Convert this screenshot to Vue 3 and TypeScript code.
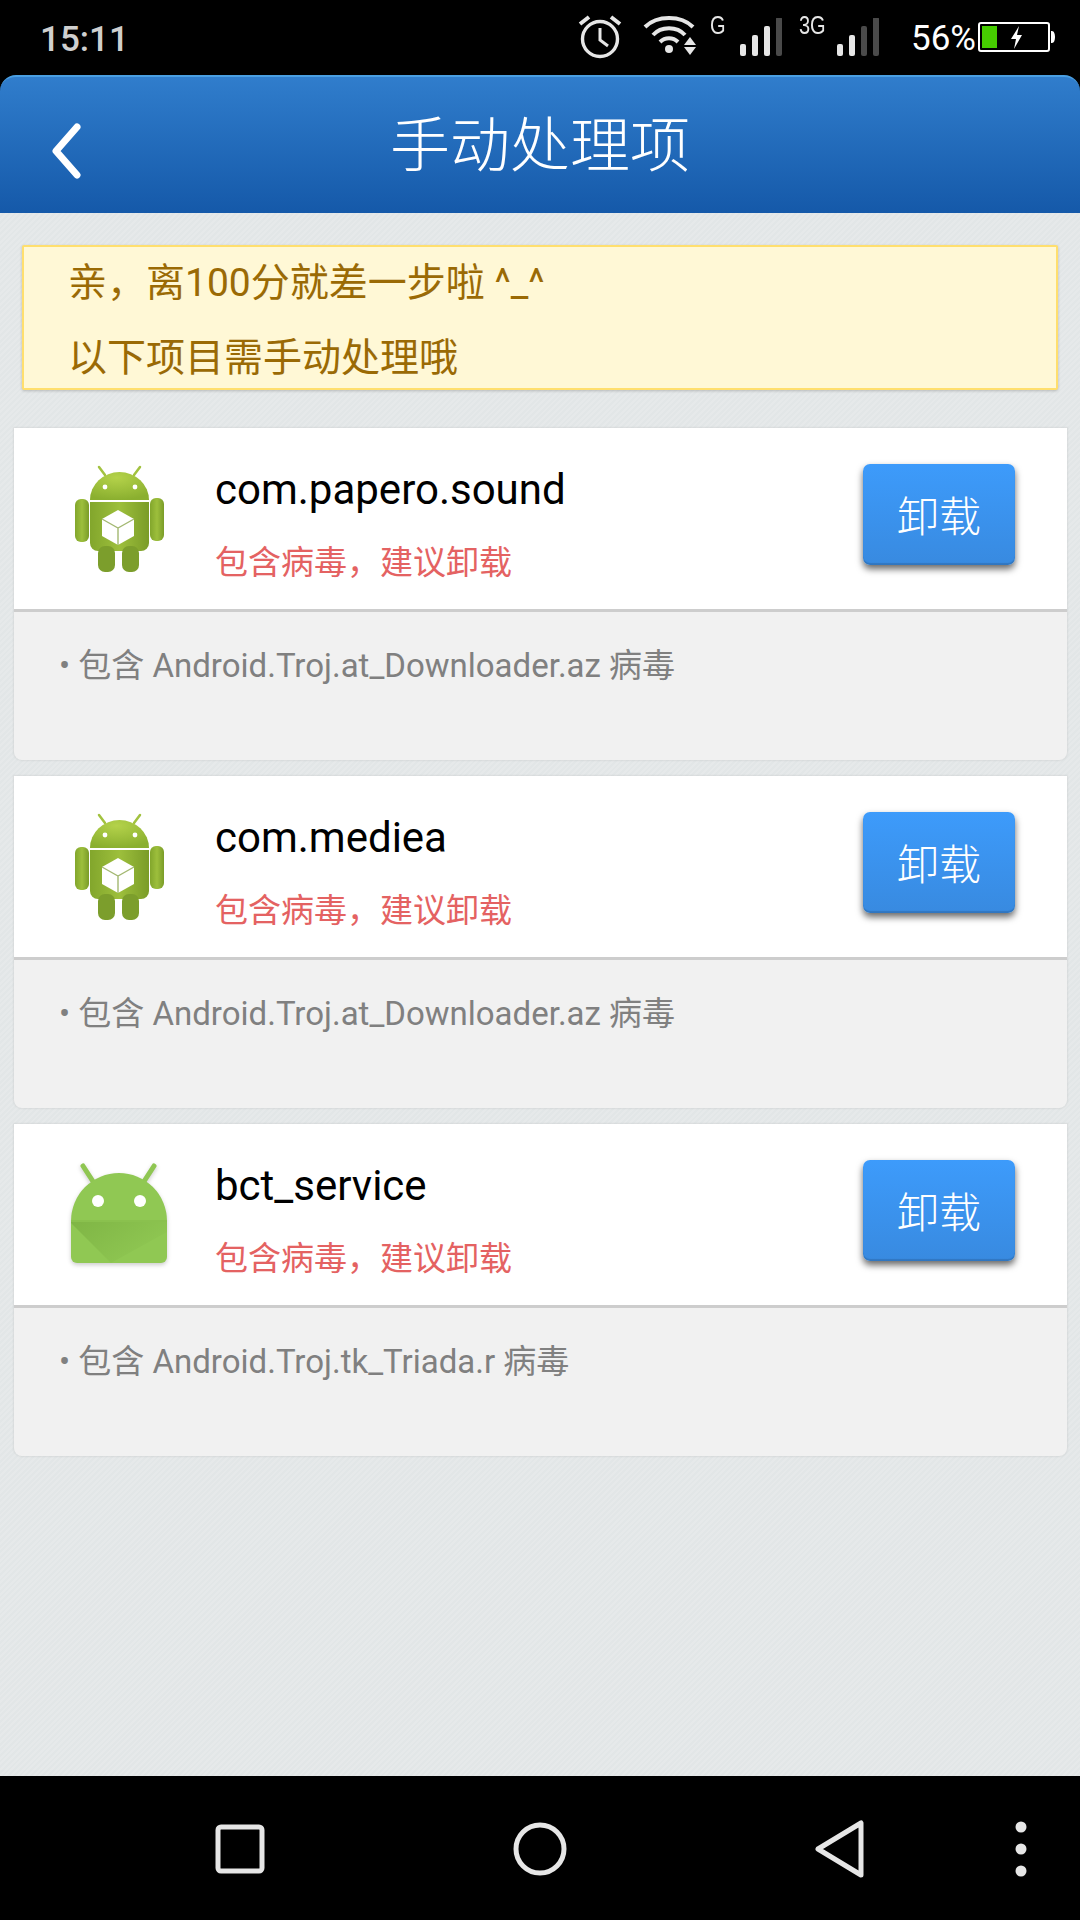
<script setup lang="ts">
interface PendingApp {
  id: number
  name: string
  flat: boolean
  virus: string
}

const apps: PendingApp[] = [
  { id: 1, name: 'com.papero.sound', flat: false, virus: 'Android.Troj.at_Downloader.az' },
  { id: 2, name: 'com.mediea', flat: false, virus: 'Android.Troj.at_Downloader.az' },
  { id: 3, name: 'bct_service', flat: true, virus: 'Android.Troj.tk_Triada.r' }
]

const signalA = ['#e6e6e6', '#e6e6e6', '#e6e6e6', '#4a4a4a']
const signalB = ['#e6e6e6', '#e6e6e6', '#4a4a4a', '#4a4a4a']
</script>

<template>
  <div class="phone">
    <div class="status">
      <span class="time">15:11</span>
      <div class="status-right">
        <svg class="alarm" width="44" height="44" viewBox="0 0 44 44" fill="none" stroke="#e6e6e6">
          <circle cx="22" cy="24" r="17.5" stroke-width="3.4" />
          <path d="M22 13v12l8 6" stroke-width="3" />
          <path d="M2 9l9-7M42 9l-9-7" stroke-width="4" />
        </svg>
        <svg class="wifi" width="54" height="42" viewBox="0 0 54 42" fill="none" stroke="#e6e6e6" stroke-width="4">
          <path d="M2 13C14 1 38 1 50 13" />
          <path d="M10 21C18 12 34 12 42 21" />
          <path d="M17 28C22 23 30 23 35 28" />
          <circle cx="26" cy="35" r="4" fill="#e6e6e6" stroke="none" />
          <path d="M47 23l6 8H41zM41 33h12l-6 8z" fill="#e6e6e6" stroke="none" />
        </svg>
        <span class="net g">G</span>
        <svg class="bars b1" width="42" height="38" viewBox="0 0 42 38">
          <rect v-for="(c, i) in signalA" :key="i" :x="i * 12" :y="26 - i * 9" width="6" :height="12 + i * 9" rx="2" :fill="c" />
        </svg>
        <span class="net g3">3G</span>
        <svg class="bars b2" width="42" height="38" viewBox="0 0 42 38">
          <rect v-for="(c, i) in signalB" :key="i" :x="i * 12" :y="26 - i * 9" width="6" :height="12 + i * 9" rx="2" :fill="c" />
        </svg>
        <span class="pct">56%</span>
        <svg class="battery" width="78" height="30" viewBox="0 0 78 30">
          <rect x="1" y="1" width="70" height="28" rx="2" fill="none" stroke="#fff" stroke-width="2" />
          <rect x="4" y="4" width="15" height="22" fill="#46cc00" />
          <path d="M41 4l-8 13h5l-2 10 8-14h-5z" fill="#fff" />
          <path d="M73 9h1c2 0 3 3 3 6s-1 6-3 6h-1z" fill="#fff" />
        </svg>
      </div>
    </div>

    <header class="bar">
      <svg class="back" width="32" height="56" viewBox="0 0 32 56" fill="none">
        <path d="M27 4L6 28l21 24" stroke="#fff" stroke-width="7" stroke-linecap="round" stroke-linejoin="round" />
      </svg>
      <h1>手动处理项</h1>
    </header>

    <main class="content">
      <div class="notice">
        <p>亲，离100分就差一步啦 ^_^</p>
        <p>以下项目需手动处理哦</p>
      </div>

      <section v-for="app in apps" :key="app.id" class="card">
        <div class="row">
          <svg v-if="!app.flat" class="icon soft" width="140" height="140" viewBox="0 0 140 140">
            <defs>
              <radialGradient id="droid-head" cx="0.45" cy="0.2" r="0.8">
                <stop offset="0" stop-color="#b4d24a" />
                <stop offset="1" stop-color="#8aaf2f" />
              </radialGradient>
              <linearGradient id="droid-body" x1="0" y1="0" x2="1" y2="0">
                <stop offset="0" stop-color="#82a62c" />
                <stop offset="0.5" stop-color="#9dbf3c" />
                <stop offset="1" stop-color="#7a9c28" />
              </linearGradient>
            </defs>
            <path d="M55 25l-6-8M84 25l6-8" stroke="#a2c23f" stroke-width="2.5" stroke-linecap="round" />
            <path d="M40 50a29.5 28 0 0 1 59 0z" fill="url(#droid-head)" />
            <circle cx="55" cy="37" r="2.4" fill="#fff" />
            <circle cx="85" cy="37" r="2.4" fill="#fff" />
            <path d="M40 52h59v41a8 8 0 0 1-8 8H48a8 8 0 0 1-8-8z" fill="url(#droid-body)" />
            <rect x="25" y="49" width="14" height="43" rx="6" fill="url(#droid-body)" />
            <rect x="100" y="48" width="14" height="43" rx="6" fill="url(#droid-body)" />
            <rect x="48" y="96" width="17" height="26" rx="7" fill="#7c9e2c" />
            <rect x="72" y="96" width="17" height="26" rx="7" fill="#7c9e2c" />
            <path d="M68 60l16 9v17l-16 9-16-9V69z" fill="#fff" />
            <path d="M52 69l16 9 16-9M68 78v17" fill="none" stroke="#a3b871" stroke-width="1.4" />
          </svg>
          <svg v-else class="icon flat" width="140" height="140" viewBox="0 0 140 140">
            <defs>
              <linearGradient id="fold" x1="0" y1="0" x2="1" y2="0.6">
                <stop offset="0" stop-color="#7fb545" />
                <stop offset="1" stop-color="#90c853" />
              </linearGradient>
            </defs>
            <path d="M33 20l11 17M104 20l-11 17" stroke="#8fc652" stroke-width="5" stroke-linecap="round" />
            <path d="M21 75a48 48 0 0 1 96 0v36a6 6 0 0 1-6 6H27a6 6 0 0 1-6-6z" fill="#90c853" />
            <path d="M21 76h96v10l-56 31L21 77z" fill="url(#fold)" />
            <path d="M21 75h96" stroke="#84ba4b" stroke-width="1" />
            <circle cx="48" cy="55" r="6" fill="#fff" />
            <circle cx="90" cy="55" r="6" fill="#fff" />
          </svg>
          <div class="info">
            <div class="name">{{ app.name }}</div>
            <div class="warn">包含病毒，建议卸载</div>
          </div>
          <button class="remove"><span>卸载</span></button>
        </div>
        <div class="detail">• 包含 {{ app.virus }} 病毒</div>
      </section>
    </main>

    <nav class="nav">
      <svg class="n-square" width="50" height="50" viewBox="0 0 50 50" fill="none">
        <rect x="3" y="3" width="44" height="44" rx="3" stroke="#e6e6e6" stroke-width="5" />
      </svg>
      <svg class="n-home" width="54" height="54" viewBox="0 0 54 54" fill="none">
        <circle cx="27" cy="27" r="24" stroke="#e6e6e6" stroke-width="5" />
      </svg>
      <svg class="n-back" width="50" height="58" viewBox="0 0 50 58" fill="none">
        <path d="M46 3v52L3 29z" stroke="#e6e6e6" stroke-width="5" stroke-linejoin="round" />
      </svg>
      <svg class="n-more" width="12" height="56" viewBox="0 0 12 56" fill="#e6e6e6">
        <circle cx="6" cy="6" r="5.5" />
        <circle cx="6" cy="28" r="5.5" />
        <circle cx="6" cy="50" r="5.5" />
      </svg>
    </nav>
  </div>
</template>

<style scoped>
.phone {
  width: 1080px;
  height: 1920px;
  display: flex;
  flex-direction: column;
  background: #000;
  font-family: Roboto, "Noto Sans CJK SC", sans-serif;
}

.status {
  height: 75px;
  display: flex;
  flex-shrink: 0;
  color: #e6e6e6;
}

.time {
  margin: 20px 0 0 40px;
  font-size: 35px;
  line-height: 40px;
  font-weight: 500;
  color: #cfcfcf;
}

.status-right {
  margin-left: auto;
  padding-right: 24px;
  display: flex;
  align-items: flex-start;
}

.alarm {
  margin-top: 15px;
}

.wifi {
  margin: 14px 0 0 21px;
}

.net {
  font-family: "Liberation Sans", sans-serif;
  font-size: 25px;
  line-height: 24px;
  margin-top: 13px;
  transform: scaleX(0.8);
  transform-origin: left center;
}

.g {
  margin-left: 13px;
  width: 16px;
}

.g3 {
  margin-left: 17px;
  width: 38px;
}

.bars {
  margin-top: 18px;
}

.b1 {
  margin-left: 14px;
}

.pct {
  margin: 19px 0 0 32px;
  font-size: 35px;
  line-height: 40px;
  width: 67px;
  color: #fff;
}

.battery {
  margin-top: 22px;
}

.bar {
  height: 138px;
  flex-shrink: 0;
  display: flex;
  align-items: center;
  justify-content: center;
  position: relative;
  border-radius: 16px 16px 0 0;
  border-top: 2px solid #4a9fe2;
  box-sizing: border-box;
  background: linear-gradient(#307dcc, #1559a9);
}

.back {
  position: absolute;
  left: 50px;
  top: 46px;
}

.bar h1 {
  margin: 0 0 10px;
  font-size: 60px;
  font-weight: 300;
  color: #fff;
}

.content {
  flex: 1;
  padding-top: 32px;
  background: repeating-linear-gradient(135deg, #e6e9ea 0 2px, #e2e6e7 2px 4px);
}

.notice {
  margin: 0 22px 38px;
  height: 145px;
  box-sizing: border-box;
  padding-left: 44px;
  background: #fff8d6;
  border: 2px solid #ffdf6e;
  border-radius: 2px;
  box-shadow: 0 1px 3px rgba(0, 0, 0, 0.2);
  color: #9a6a05;
  font-size: 39px;
}

.notice p {
  margin: 0;
  height: 75px;
  line-height: 75px;
}

.notice p:first-child {
  margin-top: -1px;
}

.card {
  margin: 0 13px 16px 14px;
  height: 332px;
  background: #f1f1f1;
  border-radius: 0 0 8px 8px;
  box-shadow: 0 0 2px 1px rgba(0, 0, 0, 0.06);
  overflow: hidden;
}

.row {
  height: 184px;
  box-sizing: border-box;
  display: flex;
  background: #fff;
  border-bottom: 3px solid #cdcdcd;
}

.icon {
  margin: 22px 0 0 36px;
  flex-shrink: 0;
}

.soft {
  filter: blur(0.6px);
}

.flat {
  filter: drop-shadow(0 2px 2px rgba(0, 0, 0, 0.2));
}

.info {
  margin-left: 26px;
  flex: 1;
}

.name {
  margin-top: 36px;
  margin-left: -1px;
  font-size: 42px;
  line-height: 52px;
  color: #000;
}

.warn {
  margin-top: 23px;
  margin-left: -1px;
  font-size: 33px;
  line-height: 48px;
  color: #e46262;
}

.remove {
  width: 152px;
  height: 101px;
  margin: 36px 52px 0 0;
  padding: 0 0 3px;
  border: none;
  border-radius: 7px;
  background: linear-gradient(#3d9bfb, #388ae0);
  box-shadow: inset 0 -2px 1px rgba(0, 0, 0, 0.14), 0 4px 7px rgba(0, 0, 0, 0.6);
  color: #fff;
  font-family: inherit;
  font-size: 42px;
  font-weight: 300;
}

.detail {
  padding: 32px 0 0 45px;
  font-size: 33px;
  line-height: 44px;
  color: #808080;
}

.nav {
  height: 144px;
  flex-shrink: 0;
  display: flex;
  align-items: flex-start;
}

.n-square {
  margin: 48px 0 0 215px;
}

.n-home {
  margin: 46px 0 0 248px;
}

.n-back {
  margin: 44px 0 0 248px;
}

.n-more {
  margin: 45px 0 0 150px;
}
</style>

<style>
html,
body {
  margin: 0;
  background: #000;
}
</style>
